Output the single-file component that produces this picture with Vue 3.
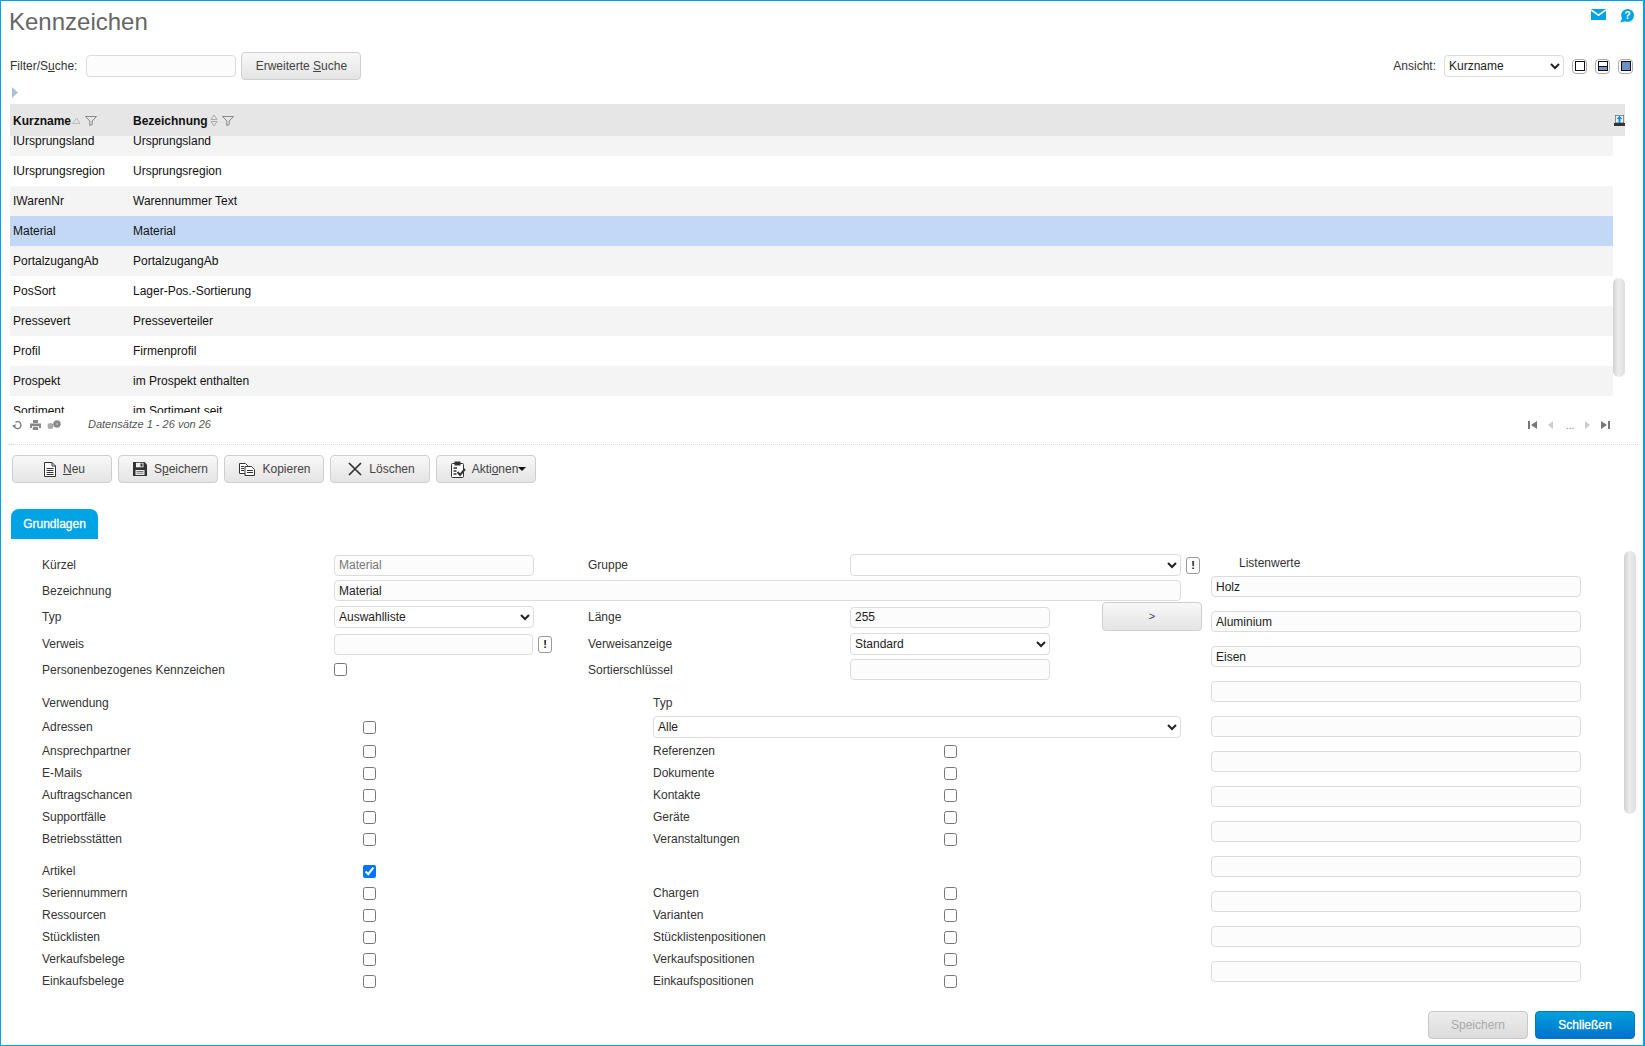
<script setup>
const rows = [
  ['IUrsprungsland', 'Ursprungsland'],
  ['IUrsprungsregion', 'Ursprungsregion'],
  ['IWarenNr', 'Warennummer Text'],
  ['Material', 'Material'],
  ['PortalzugangAb', 'PortalzugangAb'],
  ['PosSort', 'Lager-Pos.-Sortierung'],
  ['Pressevert', 'Presseverteiler'],
  ['Profil', 'Firmenprofil'],
  ['Prospekt', 'im Prospekt enthalten'],
  ['Sortiment', 'im Sortiment seit'],
]
const useA = [
  ['Ansprechpartner', 'Referenzen'],
  ['E-Mails', 'Dokumente'],
  ['Auftragschancen', 'Kontakte'],
  ['Supportfälle', 'Geräte'],
  ['Betriebsstätten', 'Veranstaltungen'],
]
const useB = [
  ['Seriennummern', 'Chargen'],
  ['Ressourcen', 'Varianten'],
  ['Stücklisten', 'Stücklistenpositionen'],
  ['Verkaufsbelege', 'Verkaufspositionen'],
  ['Einkaufsbelege', 'Einkaufspositionen'],
]
const listValues = ['Holz', 'Aluminium', 'Eisen', '', '', '', '', '', '', '', '', '']
</script>

<template>
  <div class="app">
    <header class="top">
      <h1 class="title">Kennzeichen</h1>
      <div class="top-icons">
        <svg class="ic-mail" width="15" height="11" viewBox="0 0 15 11">
          <rect width="15" height="11" fill="#00a4e4" />
          <path d="M0 .8 7.5 6.2 15 .8" fill="none" stroke="#fff" stroke-width="1.6" />
        </svg>
        <svg width="16" height="14" viewBox="0 0 16 14">
          <circle cx="8.6" cy="6.4" r="6.4" fill="#00a4e4" />
          <path d="M3.4 9 1 13.6 7 12z" fill="#00a4e4" />
          <text x="8.6" y="10" class="help-q">?</text>
        </svg>
      </div>
    </header>

    <div class="filter-row">
      <label class="lbl">Filter/S<u>u</u>che:</label>
      <input class="field filter-input" />
      <button class="btn search-btn">Erweiterte <u>S</u>uche</button>
      <span class="grow"></span>
      <label class="lbl">Ansicht:</label>
      <select class="field view-select"><option>Kurzname</option></select>
      <span class="view-ic"><i class="vi"></i></span>
      <span class="view-ic"><i class="vi half"></i></span>
      <span class="view-ic"><i class="vi full"></i></span>
    </div>

    <div class="collapse-row">
      <svg width="6" height="11" viewBox="0 0 6 11"><path d="M0 0 6 5.5 0 11z" fill="#a9c3d3" /></svg>
    </div>

    <section class="grid">
      <div class="grid-head">
        <span class="hcell c1">
          <b>Kurzname</b>
          <svg class="sort" width="9" height="9" viewBox="0 0 9 9"><path d="M.5 7.5H8L4.5 2z" fill="none" stroke="#bbb" /></svg>
          <svg class="funnel" width="12" height="10" viewBox="0 0 12 10"><path d="M.5.5h11L7.2 5v3.6L4.8 9.5V5z" fill="none" stroke="#888" /></svg>
        </span>
        <span class="hcell c2">
          <b>Bezeichnung</b>
          <svg class="sort two" width="8" height="13" viewBox="0 0 8 13"><path d="M1 5.500 4 1l3 4.500zM1 7.500 4 12l3-4.500z" fill="none" stroke="#aaa" /></svg>
          <svg class="funnel" width="12" height="10" viewBox="0 0 12 10"><path d="M.5.5h11L7.2 5v3.6L4.8 9.5V5z" fill="none" stroke="#888" /></svg>
        </span>
        <span class="grow"></span>
        <svg class="export" width="11" height="11" viewBox="0 0 11 11">
          <rect x="1" width="9" height="8" fill="#666" />
          <rect x="1.7" y=".7" width="7.6" height="6.8" fill="#ececec" />
          <path d="M5.5 .8 8.3 4H6.5v4h-2V4H2.7z" fill="#0a8fe0" />
          <rect y="8" width="11" height="3" fill="#333" />
        </svg>
      </div>
      <div class="grid-body">
        <div class="grid-rows">
          <div
            v-for="(r, i) in rows"
            :key="r[0]"
            class="row"
            :class="{ alt: i % 2 === 0, sel: r[0] === 'Material' }"
          >
            <span class="c1">{{ r[0] }}</span>
            <span class="c2">{{ r[1] }}</span>
          </div>
        </div>
        <div class="grid-track"><div class="thumb grid-thumb"></div></div>
      </div>
    </section>

    <div class="grid-foot">
      <svg class="f-ic" width="11" height="10" viewBox="0 0 11 10"><path d="M2 5a3.500 3.500 0 1 0 1.400-2.700" fill="none" stroke="#777" stroke-width="1.300" /><path d="M0 5h4L2 8z" fill="#777" transform="rotate(-20 2 5)" /></svg>
      <svg class="f-ic f-print" width="11" height="10" viewBox="0 0 11 10"><path d="M3 0h5v3H3zM0 3.500h11V8H9V6H2v2H0zM2.800 6.800h5.400V10H2.800z" fill="#888" /></svg>
      <svg class="f-ic f-cog" width="14" height="10" viewBox="0 0 14 10"><circle cx="3.500" cy="6" r="3" fill="#aaa" /><circle cx="10" cy="4" r="3.600" fill="#888" stroke="#999" stroke-dasharray="1 1" /><circle cx="10" cy="4" r="1" fill="#bbb" /></svg>
      <em class="f-count">Datensätze 1 - 26 von 26</em>
      <span class="grow"></span>
      <div class="pager f-ic">
        <svg width="9" height="8" viewBox="0 0 9 8"><path d="M0 0h2v8H0zM9 0v8L3 4z" fill="#777" /></svg>
        <svg class="pg2" width="5" height="8" viewBox="0 0 5 8"><path d="M5 0v8L0 4z" fill="#ccc" /></svg>
        <span class="dots">...</span>
        <svg class="pg4" width="5" height="8" viewBox="0 0 5 8"><path d="M0 0v8l5-4z" fill="#ccc" /></svg>
        <svg class="pg5" width="9" height="8" viewBox="0 0 9 8"><path d="M0 0v8l6-4zM7 0h2v8H7z" fill="#777" /></svg>
      </div>
    </div>

    <div class="actions">
      <button class="btn act shift">
        <svg width="12" height="15" viewBox="0 0 12 15"><path d="M.5.5h7.500L11.500 4v10.500H.5z" fill="#fff" stroke="#333" /><path d="M8 .5V4h3.500M2.500 6.500h7M2.500 8.500h7M2.500 10.500h7M2.500 12.500h7" fill="none" stroke="#333" /></svg>
        <span><u>N</u>eu</span>
      </button>
      <button class="btn act shift">
        <svg width="14" height="14" viewBox="0 0 14 14"><path d="M0 0h11.500L14 2.500V14H0z" fill="#333" /><rect x="3" y="0.8" width="7.500" height="4.500" fill="#eee" /><rect x="7.500" y="1.500" width="2" height="3" fill="#333" /><rect x="2.500" y="8" width="9" height="5" fill="#eee" /><path d="M3.500 9.500h7M3.500 11.200h7" stroke="#777" /></svg>
        <span>S<u>p</u>eichern</span>
      </button>
      <button class="btn act kop">
        <svg width="16" height="13" viewBox="0 0 16 13"><path d="M.5.5h6l2 2v8H.5z" fill="#fff" stroke="#333" /><path d="M6 3.500h6.500l3 3v6H6z" fill="#fff" stroke="#333" /><path d="M2 3.500h3M2 5.500h3M2 7.500h3M8 7.500h6M8 9.500h6" stroke="#333" /></svg>
        <span>Kopieren</span>
      </button>
      <button class="btn act del">
        <svg width="14" height="14" viewBox="0 0 14 14"><path d="M1 1 13 13M13 1 1 13" stroke="#333" stroke-width="1.700" /></svg>
        <span>Löschen</span>
      </button>
      <button class="btn act act-menu">
        <svg width="15" height="17" viewBox="0 0 15 17"><rect x=".5" y="2.500" width="12" height="14" rx="1" fill="#fff" stroke="#333" /><rect x="3.500" y="0.500" width="6" height="4" fill="#333" /><path d="M2.500 7h3.500M2.500 10h3M2.500 13h3" stroke="#333" stroke-width="1.500" /><path d="M6.500 11 9 14l5-6" fill="none" stroke="#333" stroke-width="2" /></svg>
        <span class="menu-text">Akti<u>o</u>nen</span><i class="caret"></i>
      </button>
    </div>

    <nav class="tabs"><span class="tab">Grundlagen</span></nav>

    <main class="form-area">
      <div class="form-left">
        <div class="base-grid">
          <span class="lbl">Kürzel</span>
          <input class="field in1 disabled" value="Material" readonly />
          <span class="lbl l2">Gruppe</span>
          <select class="field sel-wide"><option></option></select>
          <button class="bang side">!</button>

          <span class="lbl">Bezeichnung</span>
          <input class="field span-all" value="Material" />

          <span class="lbl">Typ</span>
          <select class="field in1"><option>Auswahlliste</option></select>
          <span class="lbl l2">Länge</span>
          <input class="field in2" value="255" />
          <button class="btn arrow-btn">&gt;</button>

          <span class="lbl">Verweis</span>
          <div class="in-bang">
            <input class="field verweis" />
            <button class="bang">!</button>
          </div>
          <span class="lbl l2">Verweisanzeige</span>
          <select class="field in2"><option>Standard</option></select>

          <span class="lbl">Personenbezogenes Kennzeichen</span>
          <div class="in1 cb-cell"><input type="checkbox" class="cb" /></div>
          <span class="lbl l2">Sortierschlüssel</span>
          <input class="field in2" />
        </div>

        <div class="use-grid first">
          <span class="lbl">Verwendung</span>
          <span></span>
          <span class="lbl">Typ</span>
          <span></span>

          <span class="lbl">Adressen</span>
          <div><input type="checkbox" class="cb" /></div>
          <select class="field alle"><option>Alle</option></select>

          <template v-for="r in useA" :key="r[0]">
            <span class="lbl">{{ r[0] }}</span>
            <div><input type="checkbox" class="cb" /></div>
            <span class="lbl">{{ r[1] }}</span>
            <div><input type="checkbox" class="cb" /></div>
          </template>
        </div>

        <div class="use-grid second">
          <span class="lbl">Artikel</span>
          <div><input type="checkbox" class="cb" checked /></div>
          <span></span>
          <span></span>
          <template v-for="r in useB" :key="r[0]">
            <span class="lbl">{{ r[0] }}</span>
            <div><input type="checkbox" class="cb" /></div>
            <span class="lbl">{{ r[1] }}</span>
            <div><input type="checkbox" class="cb" /></div>
          </template>
        </div>
      </div>

      <div class="form-right">
        <div class="lbl list-title">Listenwerte</div>
        <input v-for="(v, i) in listValues" :key="i" class="field list-in" :value="v" />
      </div>

      <div class="form-track"><div class="thumb"></div></div>
    </main>

    <footer class="bottom">
      <button class="btn b-save" disabled>Speichern</button>
      <button class="btn b-close">Schließen</button>
    </footer>
  </div>
</template>

<style scoped>
.app {
  box-sizing: border-box;
  width: 1645px;
  height: 1046px;
  border: solid #00a4e4;
  border-width: 1px 2px 1px 1px;
  background: #fff;
  font: 12px "Liberation Sans", Arial, sans-serif;
  color: #333;
  display: flex;
  flex-direction: column;
  overflow: hidden;
}
.grow { flex: 1; }
.lbl { color: #333; font-size: 12px; white-space: nowrap; }

.top {
  height: 51px;
  display: flex;
  justify-content: space-between;
  flex: none;
}
.title {
  margin: 7px 0 0 8px;
  font-size: 24px;
  line-height: 28px;
  font-weight: 400;
  color: #666;
}
.top-icons {
  display: flex;
  align-items: flex-start;
  gap: 13px;
  padding: 8px 8px 0 0;
}
.help-q {
  font: bold 10px "Liberation Sans", sans-serif;
  fill: #fff;
  text-anchor: middle;
}

.filter-row {
  height: 28px;
  display: flex;
  align-items: center;
  padding: 0 10px 0 9px;
  flex: none;
}
.field {
  box-sizing: border-box;
  height: 21px;
  border: 1px solid #dcdcdc;
  border-radius: 4px;
  background: #fcfcfc;
  font: 12px "Liberation Sans", Arial, sans-serif;
  color: #222;
  padding: 0 4px;
  margin: 0;
  outline: none;
}
select.field { background: #fff; height: 22px; padding: 0; }
.filter-input { width: 150px; height: 22px; margin-left: 9px; }
.btn {
  box-sizing: border-box;
  border: 1px solid #cfcfcf;
  border-radius: 4px;
  background: linear-gradient(#f8f8f8, #e4e4e4);
  color: #444;
  font: 12px "Liberation Sans", Arial, sans-serif;
  padding: 0;
  margin: 0;
}
.search-btn { width: 120px; height: 28px; margin-left: 5px; }
.view-select { width: 120px; margin-left: 8px; }
.view-ic {
  box-sizing: border-box;
  width: 15px;
  height: 15px;
  border: 1px solid #aaa;
  border-radius: 4px;
  margin-left: 8px;
  display: flex;
  align-items: center;
  justify-content: center;
}
.vi {
  display: block;
  box-sizing: border-box;
  width: 10px;
  height: 10px;
  border: 1px solid #111;
}
.vi.half { background: linear-gradient(#fff 45%, #111 45%, #111 58%, #7b93c0 58%); }
.vi.full { background: #6d8fc9; }

.collapse-row {
  height: 24px;
  flex: none;
  padding: 7px 0 0 11px;
  box-sizing: border-box;
}

.grid { margin-left: 9px; width: 1615px; flex: none; }
.grid-head {
  box-sizing: border-box;
  height: 32px;
  padding-top: 1px;
  background: #e6e6e6;
  display: flex;
  align-items: center;
}
.hcell { display: flex; align-items: center; color: #000; }
.hcell b { font-weight: 700; color: #111; }
.c1 { box-sizing: border-box; width: 123px; padding-left: 3px; }
.c2 { box-sizing: border-box; }
.sort { margin-left: 1px; }
.sort.two { margin-left: 2px; }
.funnel { margin-left: 4px; }
.grid-body {
  height: 277px;
  display: flex;
  overflow: hidden;
}
.grid-rows { width: 1603px; margin-top: -10px; flex: none; }
.row {
  height: 30px;
  display: flex;
  align-items: center;
  color: #111;
}
.row.alt { background: #f4f4f4; }
.row.sel { background: #c2d8f6; }
.grid-track { width: 12px; padding-top: 142px; }
.thumb {
  width: 12px;
  height: 263px;
  border-radius: 6px;
  background: linear-gradient(90deg, #d2d2d2, #ececec 45%, #dedede);
}
.grid-thumb { height: 99px; }

.grid-foot {
  box-sizing: border-box;
  height: 32px;
  flex: none;
  display: flex;
  align-items: center;
  padding: 0 30px 10px 4px;
  border-bottom: 1px dotted #d8d8d8;
  margin: 0 3px 0 7px;
}
.f-ic { margin-top: 3px; }
.f-print { margin-left: 7px; }
.f-cog { margin-left: 6px; }
.f-count {
  margin-left: 27px;
  font-size: 11px;
  color: #555;
}
.pager { display: flex; align-items: center; }
.pg2 { margin-left: 11px; }
.dots { margin-left: 13px; font-size: 10px; color: #777; width: 9px; }
.pg4 { margin-left: 10px; }
.pg5 { margin-left: 11px; }

.actions {
  flex: none;
  display: flex;
  gap: 6px;
  margin: 10px 0 0 11px;
}
.act {
  width: 100px;
  height: 28px;
  display: flex;
  align-items: center;
  justify-content: center;
  gap: 7px;
}
.shift { padding-left: 5px; }
.kop { padding-left: 2px; }
.del { padding-left: 3px; }
.act-menu { gap: 6px; padding-left: 5px; }
.caret {
  display: block;
  border: 4px solid transparent;
  border-top-color: #111;
  border-bottom: 0;
  margin: 0 0 0 -6px;
}

.tabs { flex: none; margin: 26px 0 0 10px; }
.tab {
  display: block;
  width: 87px;
  height: 30px;
  line-height: 30px;
  text-align: center;
  background: #00a4e4;
  color: #fff;
  -webkit-text-stroke: 0.3px #fff;
  border-radius: 8px 8px 0 0;
}

.form-area {
  flex: none;
  display: flex;
  margin-top: 12px;
  padding-left: 41px;
}
.form-left { width: 1160px; flex: none; padding-top: 1px; }
.base-grid {
  display: grid;
  grid-template-columns: 292px 200px 54px 262px 200px 131px 21px;
  grid-template-rows: 26px 25px 28px 26px 25px;
  align-items: center;
}
.base-grid > .lbl { grid-column: 1; }
.base-grid > .l2 { grid-column: 4; }
.in1 { grid-column: 2; width: 200px; }
.in2 { grid-column: 5; width: 200px; }
.disabled { color: #777; }
.sel-wide { grid-column: 5 / 7; width: 331px; }
.span-all { grid-column: 2 / 7; width: 847px; }
.bang {
  box-sizing: border-box;
  width: 14px;
  height: 17px;
  border: 1px solid #999;
  border-radius: 3px;
  background: #fff;
  color: #111;
  font: bold 11px "Liberation Sans", sans-serif;
  padding: 0;
}
.bang.side { grid-column: 7; margin-left: 5px; }
.arrow-btn {
  grid-column: 6 / 8;
  justify-self: end;
  width: 100px;
  height: 29px;
  margin-top: -2px;
  font-size: 11px;
}
.in-bang {
  grid-column: 2 / 4;
  display: flex;
  align-items: center;
  gap: 5px;
}
.verweis { width: 199px; }
.cb-cell { display: flex; align-items: center; }
.cb { margin: 0; display: block; width: 13px; height: 13px; }

.use-grid {
  display: grid;
  grid-template-columns: 321px 290px 291px 258px;
  grid-auto-rows: 22px;
  align-items: center;
}
.use-grid.first { margin-top: 10px; grid-template-rows: 22px 26px; }
.use-grid.second { margin-top: 10px; }
.alle { grid-column: 3 / 5; width: 528px; }

.form-right {
  width: 370px;
  flex: none;
  margin-left: 9px;
  display: flex;
  flex-direction: column;
  gap: 14px;
}
.list-title {
  height: 10px;
  padding: 1px 0 0 28px;
  line-height: 22px;
}
.form-track { margin-left: 43px; }

.bottom {
  flex: none;
  display: flex;
  justify-content: flex-end;
  gap: 7px;
  margin-top: auto;
  padding: 0 8px 6px 0;
}
.b-save, .b-close {
  width: 100px;
  height: 28px;
}
.b-save { color: #aaa; background: linear-gradient(#ececec, #dcdcdc); border-color: #c8c8c8; }
.b-close {
  color: #fff;
  -webkit-text-stroke: 0.3px #fff;
  border-color: #0078c8;
  background: linear-gradient(#00a0dc, #0072cc);
}
</style>

<style>
html, body { margin: 0; padding: 0; background: #fff; }
</style>
